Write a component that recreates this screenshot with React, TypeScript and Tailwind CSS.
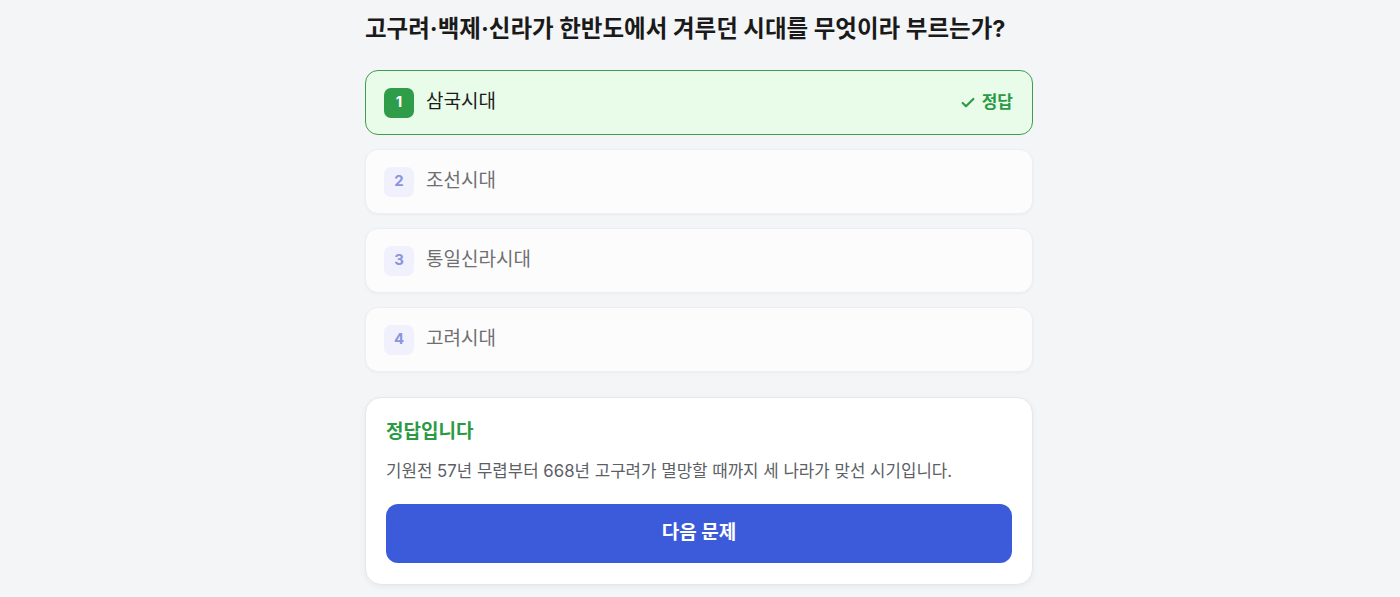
import React from 'react';
import { Check } from 'lucide-react';

type Option = {
  id: number;
  label: string;
  correct?: boolean;
};

const options: Option[] = [
  { id: 1, label: '삼국시대', correct: true },
  { id: 2, label: '조선시대' },
  { id: 3, label: '통일신라시대' },
  { id: 4, label: '고려시대' },
];

const font = { fontFamily: 'Inter, "Noto Sans CJK KR", sans-serif' };

const OptionRow: React.FC<{ option: Option }> = ({ option }) => {
  if (option.correct) {
    return (
      <div className="flex h-[65px] items-center rounded-[13px] border border-[#3f9d50] bg-[#e9fbe9] pl-[18px] pr-[19px]">
        <span className="flex h-[30px] w-[30px] items-center justify-center rounded-[7px] bg-[#2e9c48] text-[15px] font-bold text-white">
          {option.id}
        </span>
        <span className="ml-[12px] flex-1 text-[19px] text-[#1c1c1c]">
          {option.label}
        </span>
        <span className="flex items-center gap-[6px] text-[17px] font-bold text-[#2b9a45]">
          <Check size={16} strokeWidth={3.2} />
          정답
        </span>
      </div>
    );
  }

  return (
    <div className="flex h-[65px] items-center rounded-[13px] border border-[#eceef1] bg-[#fcfcfd] pl-[18px] pr-[19px] shadow-[0_1px_3px_rgba(0,0,0,0.04)]">
      <span className="flex h-[30px] w-[30px] items-center justify-center rounded-[7px] bg-[#f0f1fd] text-[15px] font-bold text-[#8b95de]">
        {option.id}
      </span>
      <span className="ml-[12px] flex-1 text-[19px] text-[#6f6f72]">
        {option.label}
      </span>
    </div>
  );
};

export default function App() {
  return (
    <div className="min-h-screen bg-[#f4f5f7] pt-[12px]" style={font}>
      <div className="mx-auto w-[668px] -translate-x-px">
        <h1 className="mb-[25px] text-[23.5px] font-bold leading-[33px] text-[#1a1a1a]">
          고구려·백제·신라가 한반도에서 겨루던 시대를 무엇이라 부르는가?
        </h1>

        <div className="flex flex-col gap-[14px]">
          {options.map((o) => (
            <OptionRow key={o.id} option={o} />
          ))}
        </div>

        <div className="mt-[25px] rounded-[16px] border border-[#e6e7ea] bg-white px-[20px] pb-[21px] pt-[20px] shadow-[0_2px_6px_rgba(0,0,0,0.05)]">
          <p className="text-[19px] font-bold leading-[27px] text-[#2b9a45]">
            정답입니다
          </p>
          <p className="mt-[14px] text-[16.8px] leading-[24px] text-[#5c5f66]">
            기원전 57년 무렵부터 668년 고구려가 멸망할 때까지 세 나라가 맞선 시기입니다.
          </p>
          <button className="mt-[21px] flex h-[59px] w-full items-center justify-center rounded-[12px] bg-[#3b5bdb] text-[19px] font-bold text-white">
            다음 문제
          </button>
        </div>
      </div>
    </div>
  );
}
